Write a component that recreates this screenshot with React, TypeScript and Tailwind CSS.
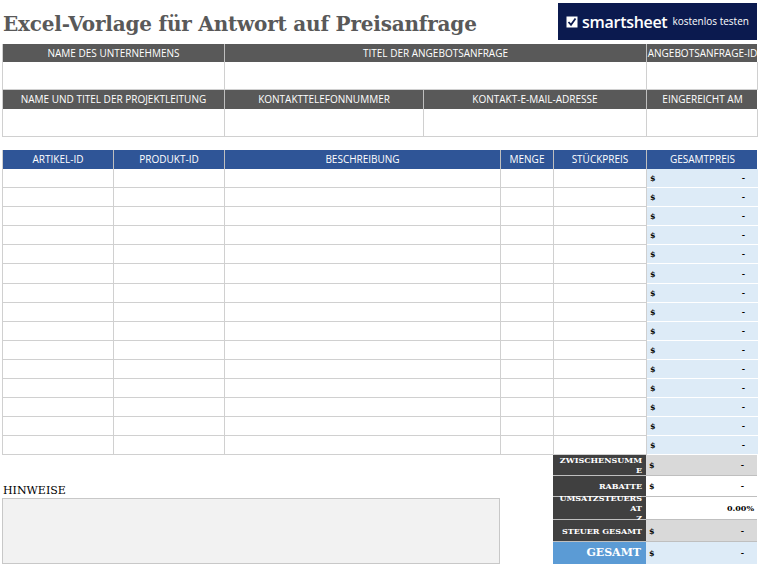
export default function App() {
  const rows = Array.from({ length: 15 });
  const hd = "flex items-center justify-center text-white text-[10px] border-r border-[#bfbfbf] last:border-r-0";
  const cell = "border-r border-b border-[#d0d0d0]";
  return (
    <div className="w-[759px] h-[568px] bg-white relative" style={{ fontFamily: '"Open Sans", sans-serif' }}>
      <div className="flex items-start justify-between pl-[3px] pr-[2px] pt-[3px] h-[44px]">
        <div className="text-[#595959] font-bold text-[20px] mt-[6px] tracking-[-0.2px]" style={{ fontFamily: '"DejaVu Serif", serif' }}>Excel-Vorlage für Antwort auf Preisanfrage</div>
        <div className="w-[199px] h-[37px] bg-[#0b1a4f] flex items-center justify-center gap-[4px] text-white">
          <svg width="12" height="12" viewBox="0 0 12 12"><rect x="0.5" y="0.5" width="11" height="11" fill="white"/><path d="M2.5 6 L5 8.8 L9.5 2.5" stroke="#0b1a4f" strokeWidth="1.8" fill="none"/></svg>
          <span className="text-[16px] font-semibold tracking-[-0.3px]">smartsheet</span>
          <span className="text-[10px] ml-[1px]">kostenlos testen</span>
        </div>
      </div>
      <div className="ml-[2px] w-[755px] border-l border-[#d0d0d0]">
        <div className="grid grid-cols-[222px_422px_111px] h-[18px] bg-[#595959]">
          <div className={hd}>NAME DES UNTERNEHMENS</div>
          <div className={hd}>TITEL DER ANGEBOTSANFRAGE</div>
          <div className={hd}>ANGEBOTSANFRAGE-ID</div>
        </div>
        <div className="grid grid-cols-[222px_422px_111px] h-[28px]">
          <div className={cell}></div><div className={cell}></div><div className={cell}></div>
        </div>
        <div className="grid grid-cols-[222px_199px_223px_111px] h-[19px] bg-[#595959]">
          <div className={hd}>NAME UND TITEL DER PROJEKTLEITUNG</div>
          <div className={hd}>KONTAKTTELEFONNUMMER</div>
          <div className={hd}>KONTAKT-E-MAIL-ADRESSE</div>
          <div className={hd}>EINGEREICHT AM</div>
        </div>
        <div className="grid grid-cols-[222px_199px_223px_111px] h-[28px]">
          <div className={cell}></div><div className={cell}></div><div className={cell}></div><div className={cell}></div>
        </div>
      </div>
      <div className="ml-[2px] w-[755px] mt-[13px] border-l border-[#d0d0d0]">
        <div className="grid grid-cols-[111px_111px_276px_53px_93px_111px] h-[19px] bg-[#2f5597]">
          {["ARTIKEL-ID", "PRODUKT-ID", "BESCHREIBUNG", "MENGE", "STÜCKPREIS", "GESAMTPREIS"].map((t) => (
            <div key={t} className={hd}>{t}</div>
          ))}
        </div>
        {rows.map((_, i) => (
          <div key={i} className="grid grid-cols-[111px_111px_276px_53px_93px_111px] h-[19.1px]">
            <div className={cell}></div><div className={cell}></div><div className={cell}></div><div className={cell}></div><div className={cell}></div>
            <div className="bg-[#ddebf7] border-b border-white flex items-center justify-between px-[3px] text-[8px] font-bold text-black" style={{ fontFamily: '"DejaVu Serif", serif' }}>
              <span>$</span><span className="pr-[10px]">-</span>
            </div>
          </div>
        ))}
      </div>
      <div className="ml-[2px] flex">
        <div className="w-[498px] flex flex-col">
          <div className="h-[28px]"></div>
          <div className="text-[11px] text-black h-[15px] leading-[15px] pl-[1px]" style={{ fontFamily: '"DejaVu Serif", serif' }}>HINWEISE</div>
          <div className="h-[66px] bg-[#f2f2f2] border border-[#c8c8c8]"></div>
        </div>
        <div className="ml-[53px] flex flex-col" style={{ fontFamily: '"DejaVu Serif", serif' }}>
          {[
            { l: "ZWISCHENSUMME", v: "d", bg: "bg-[#d9d9d9]", h: "h-[21px]" },
            { l: "RABATTE", v: "d", bg: "bg-white", h: "h-[21px]" },
            { l: "UMSATZSTEUERSATZ", v: "p", bg: "bg-white", h: "h-[23px]" },
            { l: "STEUER GESAMT", v: "d", bg: "bg-[#d9d9d9]", h: "h-[22px]" },
          ].map((r) => (
            <div key={r.l} className={`flex ${r.h} border-b border-[#bfbfbf]`}>
              <div className="w-[93px] bg-[#404040] text-white text-[8px] font-bold flex items-center justify-end px-[4px] text-right leading-[10px] break-all">
                {r.l === "UMSATZSTEUERSATZ" ? <span>UMSATZSTEUERSAT<br />Z</span> : r.l}
              </div>
              <div className={`w-[111px] ${r.bg} text-[8px] font-bold flex items-center justify-between px-[3px]`}>
                {r.v === "d" ? (<><span>$</span><span className="pr-[10px]">-</span></>) : (<><span></span><span>0.00%</span></>)}
              </div>
            </div>
          ))}
          <div className="flex h-[22px]">
            <div className="w-[93px] bg-[#5b9bd5] text-white text-[11px] font-bold flex items-center justify-end px-[5px]">GESAMT</div>
            <div className="w-[111px] bg-[#ddebf7] text-[8px] font-bold flex items-center justify-between px-[3px]">
              <span>$</span><span className="pr-[10px]">-</span>
            </div>
          </div>
        </div>
      </div>
    </div>
  );
}
